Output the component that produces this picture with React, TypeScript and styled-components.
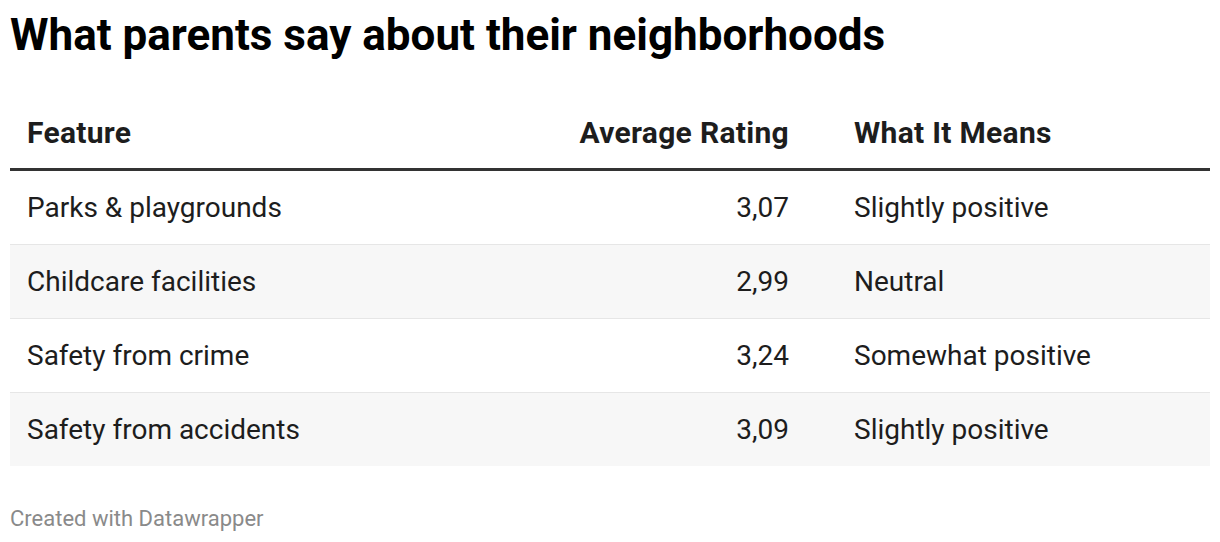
import { FC } from "react";
import styled, { createGlobalStyle } from "styled-components";

const GlobalStyle = createGlobalStyle`
  html, body {
    margin: 0;
    padding: 0;
    background: #ffffff;
  }
  body {
    font-family: Roboto, "Liberation Sans", Arial, sans-serif;
    color: #1d1d1d;
  }
`;

const Page = styled.div`
  padding: 10px 10px 0 10px;
  display: flex;
  flex-direction: column;
`;

const Title = styled.h1`
  margin: 0;
  font-size: 44px;
  line-height: 50px;
  font-weight: 700;
  color: #000;
`;

const Table = styled.table`
  margin-top: 51px;
  width: 100%;
  table-layout: fixed;
  border-collapse: collapse;
  font-size: 28px;
`;

const HeadCell = styled.th<{ align?: "left" | "right"; pr?: number }>`
  text-align: ${({ align }) => align ?? "left"};
  font-weight: 700;
  font-size: 30px;
  letter-spacing: 0.3px;
  color: #1d1d1d;
  padding: 0 ${({ pr }) => pr ?? 16}px 0 17px;
  height: 57px;
  vertical-align: top;
  line-height: 44px;
  border-bottom: 3px solid #333;
  white-space: nowrap;
`;

const Row = styled.tr<{ shaded: boolean }>`
  background: ${({ shaded }) => (shaded ? "#f7f7f7" : "#ffffff")};
  border-bottom: 1px solid #e6e6e6;
  &:last-child {
    border-bottom: none;
  }
`;

const Cell = styled.td<{ align?: "left" | "right"; pr?: number }>`
  text-align: ${({ align }) => align ?? "left"};
  height: 73px;
  padding: 0 ${({ pr }) => pr ?? 16}px 0 17px;
  vertical-align: middle;
  color: #1d1d1d;
  white-space: nowrap;
  line-height: 34px;
`;

const Footer = styled.div`
  margin-top: 40px;
  font-size: 22px;
  color: #8a8a8a;
`;

const rows = [
  { feature: "Parks & playgrounds", rating: "3,07", meaning: "Slightly positive" },
  { feature: "Childcare facilities", rating: "2,99", meaning: "Neutral" },
  { feature: "Safety from crime", rating: "3,24", meaning: "Somewhat positive" },
  { feature: "Safety from accidents", rating: "3,09", meaning: "Slightly positive" },
];

const App: FC = () => {
  return (
    <>
      <GlobalStyle />
      <Page>
        <Title>What parents say about their neighborhoods</Title>
        <Table>
          <colgroup>
            <col style={{ width: "540px" }} />
            <col style={{ width: "287px" }} />
            <col />
          </colgroup>
          <thead>
            <tr>
              <HeadCell>Feature</HeadCell>
              <HeadCell align="right" pr={48}>Average Rating</HeadCell>
              <HeadCell>What It Means</HeadCell>
            </tr>
          </thead>
          <tbody>
            {rows.map((r, i) => (
              <Row key={r.feature} shaded={i % 2 === 1}>
                <Cell>{r.feature}</Cell>
                <Cell align="right" pr={48}>{r.rating}</Cell>
                <Cell>{r.meaning}</Cell>
              </Row>
            ))}
          </tbody>
        </Table>
        <Footer>Created with Datawrapper</Footer>
      </Page>
    </>
  );
};

export default App;
